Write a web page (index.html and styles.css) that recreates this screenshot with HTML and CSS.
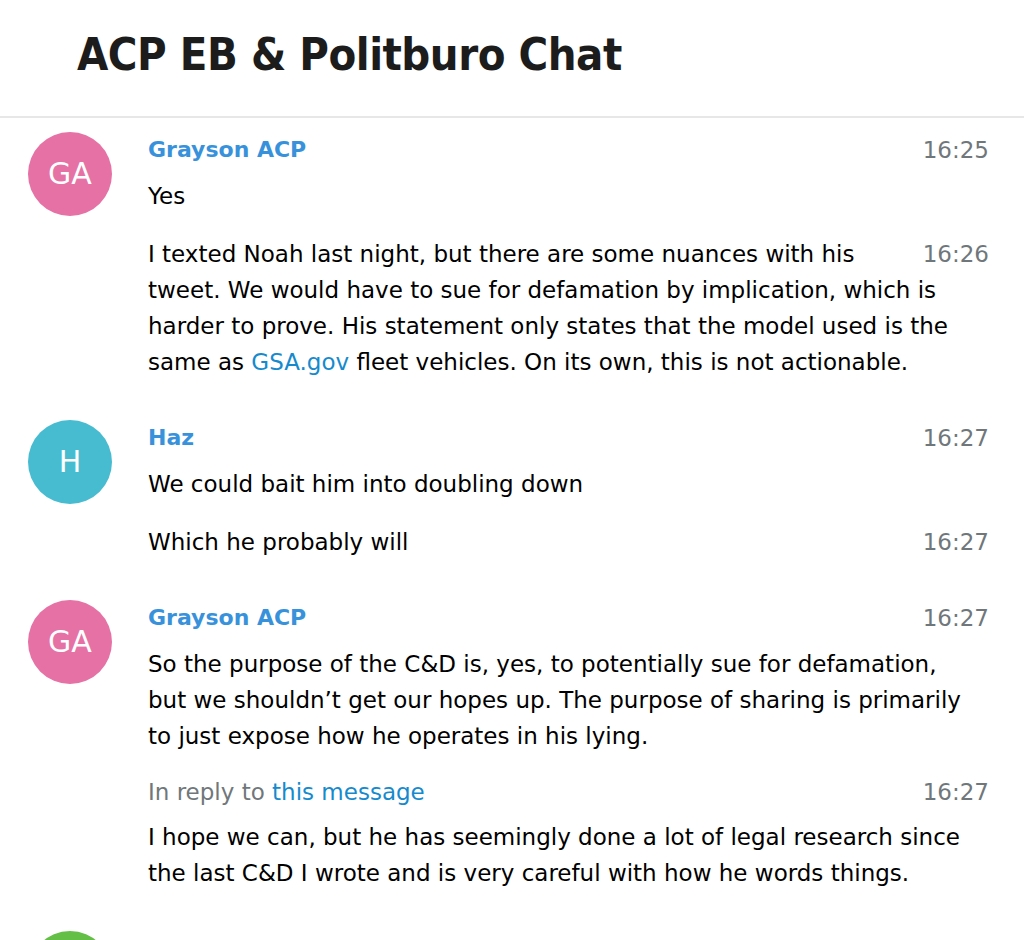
FILE: index.html
```html
<!DOCTYPE html>
<html lang="en">
<head>
  <meta charset="UTF-8">
  <title>ACP EB &amp; Politburo Chat</title>
  <link rel="stylesheet" href="styles.css">
</head>
<body>
  <div class="page_header">
    <div class="text">ACP EB &amp; Politburo Chat</div>
  </div>

  <div class="history">
    <div class="message default">
      <div class="userpic userpic6">GA</div>
      <div class="body">
        <div class="date">16:25</div>
        <div class="from_name">Grayson ACP</div>
        <div class="text">Yes</div>
      </div>
    </div>

    <div class="message joined">
      <div class="body">
        <div class="date">16:26</div>
        <div class="text">I texted Noah last night, but there are some nuances with his tweet. We would have to sue for defamation by implication, which is harder to prove. His statement only states that the model used is the same as <a href="http://GSA.gov">GSA.gov</a> fleet vehicles. On its own, this is not actionable.</div>
      </div>
    </div>

    <div class="message default">
      <div class="userpic userpic7">H</div>
      <div class="body">
        <div class="date">16:27</div>
        <div class="from_name">Haz</div>
        <div class="text">We could bait him into doubling down</div>
      </div>
    </div>

    <div class="message joined">
      <div class="body">
        <div class="date">16:27</div>
        <div class="text">Which he probably will</div>
      </div>
    </div>

    <div class="message default">
      <div class="userpic userpic6">GA</div>
      <div class="body">
        <div class="date">16:27</div>
        <div class="from_name">Grayson ACP</div>
        <div class="text">So the purpose of the C&amp;D is, yes, to potentially sue for defamation, but we shouldn’t get our hopes up. The purpose of sharing is primarily to just expose how he operates in his lying.</div>
      </div>
    </div>

    <div class="message joined">
      <div class="body">
        <div class="date">16:27</div>
        <div class="reply_to">In reply to <a href="#go_to_message">this message</a></div>
        <div class="text">I hope we can, but he has seemingly done a lot of legal research since the last C&amp;D I wrote and is very careful with how he words things.</div>
      </div>
    </div>

    <div class="message default">
      <div class="userpic userpic2"></div>
      <div class="body"></div>
    </div>
  </div>
</body>
</html>
```

FILE: styles.css
```css
body {
  margin: 0;
  background: #fff;
  color: #000;
  font-family: "DejaVu Sans", "Lucida Grande", sans-serif;
  font-size: 23px;
  line-height: 36px;
}
a {
  color: #168acd;
  text-decoration: none;
}
.page_header {
  padding: 28px 77px 34px;
  border-bottom: 2px solid #e7e7e7;
}
.page_header .text {
  font-family: "DejaVu Sans Condensed", "DejaVu Sans", sans-serif;
  font-stretch: condensed;
  font-size: 45px;
  line-height: 54px;
  font-weight: bold;
  letter-spacing: -0.5px;
  color: #1c1c1c;
}
.history {
  padding: 14px 35px 0 28px;
}
.message {
  display: flow-root;
}
.message.default {
  margin-top: 40px;
}
.message.default:first-child {
  margin-top: 0;
}
.message.joined {
  margin-top: 20px;
}
.userpic {
  float: left;
  width: 84px;
  height: 84px;
  border-radius: 50%;
  color: #fff;
  font-size: 30px;
  line-height: 84px;
  text-align: center;
}
.userpic2 { background: #64bf47; }
.userpic6 { background: #e671a5; }
.userpic7 { background: #47bcd1; }
.body {
  margin-left: 120px;
}
.date {
  float: right;
  padding-left: 10px;
  color: #70777b;
}
.from_name {
  margin-bottom: 10px;
  font-size: 22px;
  font-weight: bold;
  color: #3892db;
}
.text {
  padding-right: 9px;
}
.reply_to {
  margin-bottom: 9px;
  color: #70777b;
}
```
